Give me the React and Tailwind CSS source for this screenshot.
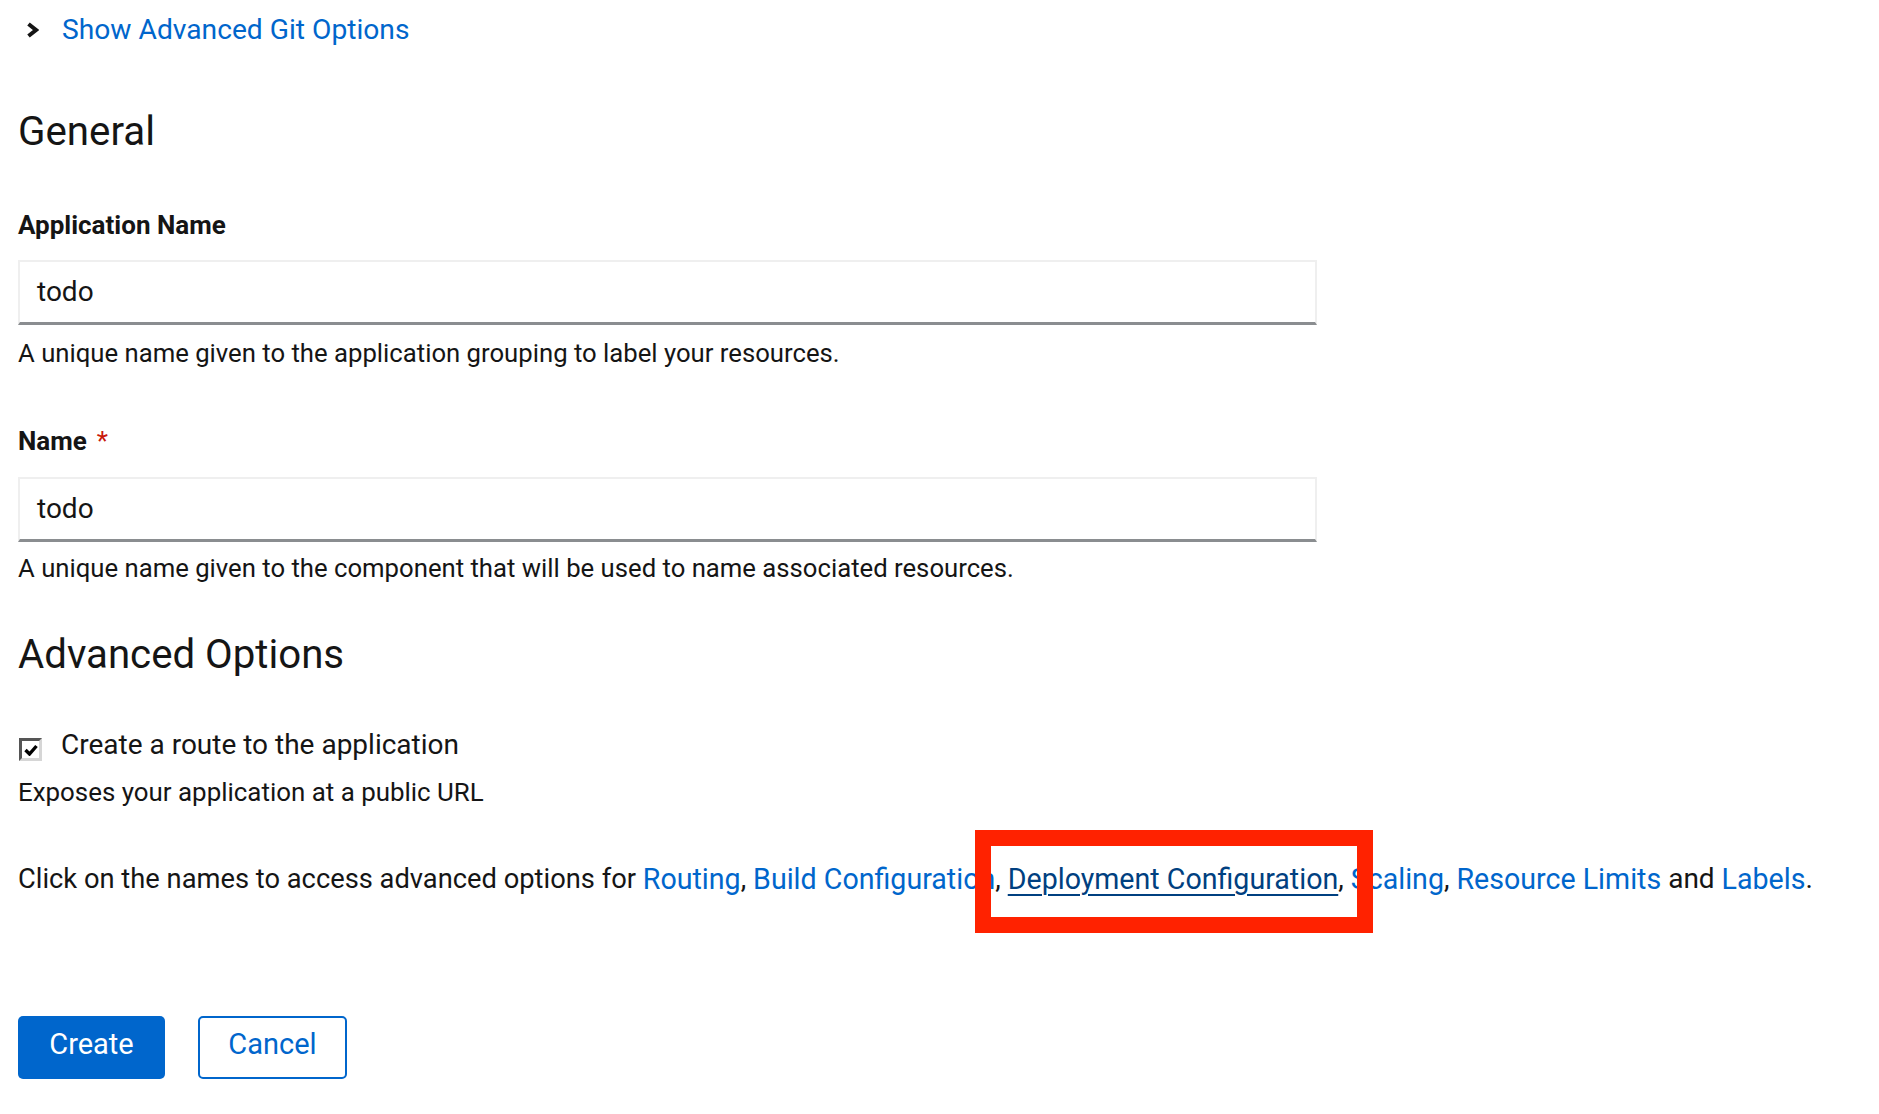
import React from "react";

const font = { fontFamily: "Roboto, 'Liberation Sans', sans-serif" };

const Field = ({ label, required, value, help, labelTop, inputTop, helpTop }) => {
    return (
        <div>
            <div className={`${labelTop} h-[30px] flex items-center text-[26px] font-bold text-[#151515]`}>
                {label}
                {required && <span className="ml-[10px] text-[#c9190b] font-normal">*</span>}
            </div>
            <div className={`${inputTop} w-[1299px] h-[65px] flex items-center pl-[17px] border-2 border-[#efefef] border-b-[3px] border-b-[#8a8d90] text-[28px] text-[#151515] bg-white`}>
                {value}
            </div>
            <div className={`${helpTop} h-[30px] flex items-center text-[25.7px] text-[#151515]`}>{help}</div>
        </div>
    );
};

const Link = ({ children, active }) => (
    <span className={active ? "text-[28.6px] text-[#004080] underline underline-offset-[5px] decoration-[2px]" : "text-[28.6px] text-[#0066cc]"}>{children}</span>
);

const App = () => {
    return (
        <div className="relative w-[1879px] h-[1114px] bg-white overflow-hidden" style={font}>
            <div className="px-[18px]">
                <div className="h-[60px] flex items-center">
                    <svg className="ml-[8px] w-[13px] h-[16px]" viewBox="0 0 13 16">
                        <path d="M2.5 2 L10 8 L2.5 14" fill="none" stroke="#151515" strokeWidth="4" />
                    </svg>
                    <span className="ml-[23px] text-[28.2px] text-[#0066cc]">Show Advanced Git Options</span>
                </div>

                <h2 className="mt-[50px] h-[44px] flex items-center text-[40.3px] text-[#151515]">General</h2>

                <Field
                    label="Application Name"
                    value="todo"
                    help="A unique name given to the application grouping to label your resources."
                    labelTop="mt-[56px]"
                    inputTop="mt-[20px]"
                    helpTop="mt-[13px]"
                />
                <Field
                    label="Name"
                    required
                    value="todo"
                    help="A unique name given to the component that will be used to name associated resources."
                    labelTop="mt-[58px]"
                    inputTop="mt-[21px]"
                    helpTop="mt-[11px]"
                />

                <h2 className="mt-[50px] h-[44px] flex items-center text-[40.2px] text-[#151515]">Advanced Options</h2>

                <div className="mt-[51px] h-[34px] flex items-center">
                    <div className="mt-[9px] ml-[1px] w-[23px] h-[23px] flex items-center justify-center bg-white border-[3px] border-t-[#555] border-l-[#555] border-b-[#d6d6d6] border-r-[#d6d6d6]">
                        <svg className="w-[14px] h-[12px]" viewBox="0 0 14 12">
                            <path d="M1.5 6 L5.5 10 L12.5 2" fill="none" stroke="#000" strokeWidth="3.4" />
                        </svg>
                    </div>
                    <span className="ml-[19px] text-[28px] text-[#151515]">Create a route to the application</span>
                </div>
                <div className="mt-[15px] h-[30px] flex items-center text-[25.9px] text-[#151515]">
                    Exposes your application at a public URL
                </div>

                <p className="mt-[55px] h-[34px] flex items-center whitespace-pre text-[28px] text-[#151515]">
                    <span className="text-[27.3px]">Click on the names to access advanced options for </span><Link>Routing</Link>, <Link>Build Configuration</Link>, <Link active>Deployment Configuration</Link>, <Link>Scaling</Link>, <Link>Resource Limits</Link> and <Link>Labels</Link>.
                </p>

                <div className="mt-[120px] flex gap-[33px]">
                    <button className="w-[147px] h-[63px] pb-[5px] rounded-[5px] bg-[#0066cc] text-white text-[29px]">Create</button>
                    <button className="w-[149px] h-[63px] pb-[5px] rounded-[5px] border-2 border-[#0066cc] bg-white text-[#0066cc] text-[29px]">Cancel</button>
                </div>
            </div>

            <div className="absolute left-[975px] top-[830px] w-[398px] h-[103px] border-[16px] border-[#ff2200]" />
        </div>
    );
};

export default App;
